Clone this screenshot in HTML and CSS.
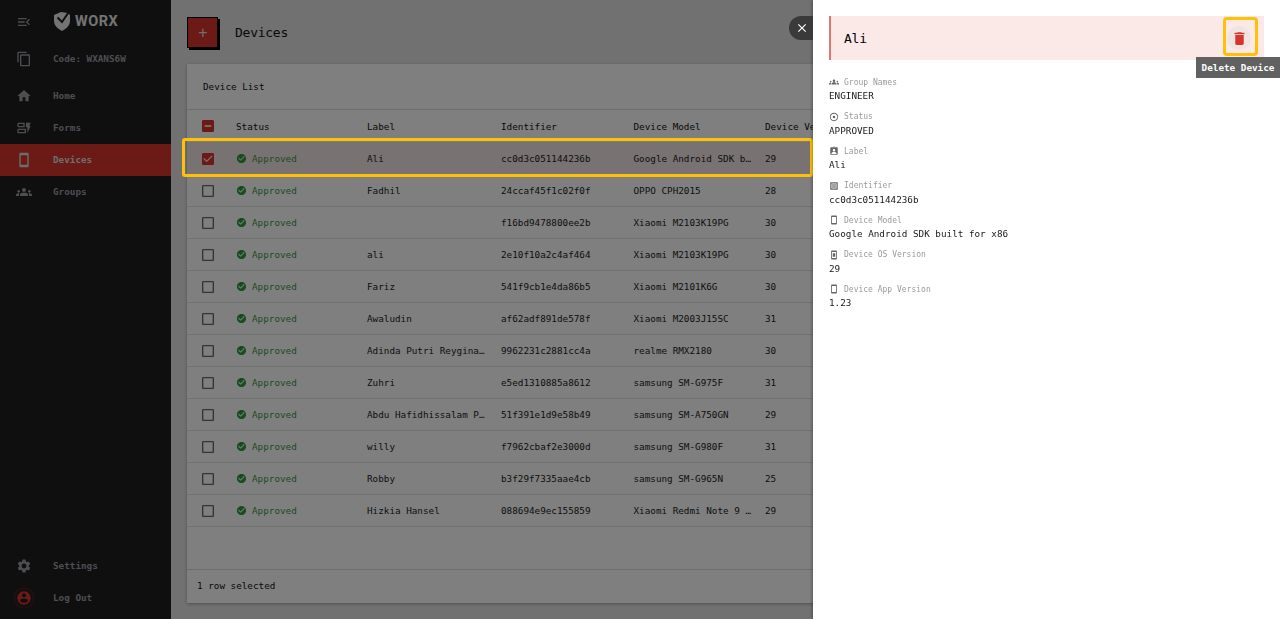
FILE: index.html
```html
<!DOCTYPE html>
<html lang="en">
<head>
<meta charset="utf-8">
<title>Devices</title>
<link rel="stylesheet" href="styles.css">
</head>
<body>
<div class="app">
  <aside class="sidebar">
    <div class="side-top">
      <div class="brand">
        <svg class="ico menu-ico" viewBox="0 0 24 24"><path d="M3 18h13v-2H3v2zm0-5h10v-2H3v2zm0-7v2h13V6H3zm18 9.59L17.42 12 21 8.41 19.59 7l-5 5 5 5L21 15.59z"/></svg>
        <svg class="logo" viewBox="0 0 18 20"><path d="M1 4 8 1l7 1 2 2v6c0 4.500-3.500 7.500-8 10-4.500-2.500-8-5.500-8-10z"/><path class="logo-cut" d="M4.500 6.500 9 11 15.500 1.500"/></svg>
        <span class="brand-name">WORX</span>
      </div>
      <div class="nav-item code"><svg class="ico" viewBox="0 0 24 24"><path d="M16 1H4c-1.100 0-2 .9-2 2v14h2V3h12V1zm3 4H8c-1.100 0-2 .9-2 2v14c0 1.100.9 2 2 2h11c1.100 0 2-.9 2-2V7c0-1.100-.9-2-2-2zm0 16H8V7h11v14z"/></svg><span>Code: WXANS6W</span></div>
      <nav class="nav">
        <div class="nav-item"><svg class="ico" viewBox="0 0 24 24"><path d="M10 20v-6h4v6h5v-8h3L12 3 2 12h3v8z"/></svg><span>Home</span></div>
        <div class="nav-item"><svg class="ico" viewBox="0 0 24 24"><path d="M13 11H4c-1.100 0-2-.9-2-2V6c0-1.100.9-2 2-2h9v7zM4 9h7V6H4v3zm11 11H4c-1.100 0-2-.9-2-2v-3c0-1.100.9-2 2-2h11v7zM4 18h9v-3H4v3zm18-9h-2l2-5h-7v7h2v9l5-11z"/></svg><span>Forms</span></div>
        <div class="nav-item active"><svg class="ico" viewBox="0 0 24 24"><path d="M17 1.010 7 1c-1.100 0-2 .9-2 2v18c0 1.100.9 2 2 2h10c1.100 0 2-.9 2-2V3c0-1.100-.9-1.990-2-1.990zM17 19H7V5h10v14z"/></svg><span>Devices</span></div>
        <div class="nav-item"><svg class="ico" viewBox="0 0 24 24"><path d="M12 12.750c1.630 0 3.070.39 4.240.9 1.080.48 1.760 1.560 1.760 2.730V18H6v-1.610c0-1.180.68-2.260 1.760-2.730 1.170-.52 2.610-.91 4.240-.91zM4 13c1.100 0 2-.9 2-2s-.9-2-2-2-2 .9-2 2 .9 2 2 2zm1.130 1.100c-.37-.06-.74-.1-1.130-.1-.99 0-1.930.21-2.780.58C.48 14.900 0 15.620 0 16.430V18h4.500v-1.610c0-.83.23-1.610.63-2.290zM20 13c1.100 0 2-.9 2-2s-.9-2-2-2-2 .9-2 2 .9 2 2 2zm4 3.430c0-.81-.48-1.530-1.220-1.850-.85-.37-1.790-.58-2.780-.58-.39 0-.76.04-1.130.1.4.68.63 1.460.63 2.290V18H24v-1.570zM12 6c1.660 0 3 1.340 3 3s-1.340 3-3 3-3-1.340-3-3 1.340-3 3-3z"/></svg><span>Groups</span></div>
      </nav>
    </div>
    <div class="side-bottom">
      <div class="nav-item"><svg class="ico" viewBox="0 0 24 24"><path d="M19.140 12.940c.04-.3.06-.61.06-.94 0-.32-.02-.64-.07-.94l2.030-1.580c.18-.14.23-.41.12-.61l-1.920-3.320c-.12-.22-.37-.29-.59-.22l-2.390.96c-.5-.38-1.030-.7-1.620-.94l-.36-2.540c-.04-.24-.24-.41-.48-.41h-3.840c-.24 0-.43.17-.47.41l-.36 2.540c-.59.24-1.130.57-1.620.94l-2.390-.96c-.22-.08-.47 0-.59.22L2.740 8.870c-.12.21-.08.47.12.61l2.030 1.580c-.05.3-.09.63-.09.94s.02.64.07.94l-2.030 1.580c-.18.14-.23.41-.12.61l1.920 3.320c.12.22.37.29.59.22l2.390-.96c.5.38 1.030.7 1.620.94l.36 2.540c.05.24.24.41.48.41h3.840c.24 0 .44-.17.47-.41l.36-2.540c.59-.24 1.130-.56 1.620-.94l2.390.96c.22.08.47 0 .59-.22l1.920-3.320c.12-.22.07-.47-.12-.61l-2.010-1.580zM12 15.600c-1.980 0-3.600-1.620-3.600-3.600s1.620-3.600 3.600-3.600 3.600 1.620 3.600 3.600-1.620 3.600-3.600 3.600z"/></svg><span>Settings</span></div>
      <div class="nav-item logout"><i class="logout-ico"><svg class="ico" viewBox="0 0 24 24"><path d="M12 2C6.480 2 2 6.480 2 12s4.480 10 10 10 10-4.480 10-10S17.520 2 12 2zm0 3c1.660 0 3 1.340 3 3s-1.340 3-3 3-3-1.340-3-3 1.340-3 3-3zm0 14.200c-2.500 0-4.710-1.280-6-3.220.03-1.990 4-3.080 6-3.080 1.990 0 5.970 1.090 6 3.080-1.290 1.940-3.500 3.220-6 3.220z"/></svg></i><span>Log Out</span></div>
    </div>
  </aside>

  <main class="main">
    <header class="page-head">
      <button class="add-btn" type="button">+</button>
      <h1 class="page-title">Devices</h1>
    </header>
    <section class="card">
      <div class="card-title">Device List</div>
      <div class="table">
        <div class="row head">
          <span class="cell-check"><svg class="box on" viewBox="0 0 24 24"><path d="M19 3H5c-1.100 0-2 .9-2 2v14c0 1.100.9 2 2 2h14c1.100 0 2-.9 2-2V5c0-1.100-.9-2-2-2zm-2 10H7v-2h10v2z"/></svg></span>
          <span class="cell">Status</span><span class="cell">Label</span><span class="cell">Identifier</span><span class="cell">Device Model</span><span class="cell">Device Version</span>
        </div>
        <div class="row selected">
          <span class="cell-check"><svg class="box on" viewBox="0 0 24 24"><path d="M19 3H5c-1.110 0-2 .9-2 2v14c0 1.100.89 2 2 2h14c1.110 0 2-.9 2-2V5c0-1.100-.89-2-2-2zm-9 14-5-5 1.410-1.410L10 14.170l7.590-7.590L19 8l-9 9z"/></svg></span>
          <span class="cell status"><svg class="ok" viewBox="0 0 24 24"><path d="M12 2C6.480 2 2 6.480 2 12s4.480 10 10 10 10-4.480 10-10S17.520 2 12 2zm-2 15-5-5 1.410-1.410L10 14.170l7.590-7.590L19 8l-9 9z"/></svg>Approved</span>
          <span class="cell">Ali</span><span class="cell">cc0d3c051144236b</span><span class="cell">Google Android SDK built for x86</span><span class="cell">29</span>
        </div>
        <div class="row"><span class="cell-check"><svg class="box" viewBox="0 0 24 24"><path d="M19 5v14H5V5h14m0-2H5c-1.100 0-2 .9-2 2v14c0 1.100.9 2 2 2h14c1.100 0 2-.9 2-2V5c0-1.100-.9-2-2-2z"/></svg></span><span class="cell status"><svg class="ok" viewBox="0 0 24 24"><path d="M12 2C6.480 2 2 6.480 2 12s4.480 10 10 10 10-4.480 10-10S17.520 2 12 2zm-2 15-5-5 1.410-1.410L10 14.170l7.590-7.590L19 8l-9 9z"/></svg>Approved</span><span class="cell">Fadhil</span><span class="cell">24ccaf45f1c02f0f</span><span class="cell">OPPO CPH2015</span><span class="cell">28</span></div>
        <div class="row"><span class="cell-check"><svg class="box" viewBox="0 0 24 24"><path d="M19 5v14H5V5h14m0-2H5c-1.100 0-2 .9-2 2v14c0 1.100.9 2 2 2h14c1.100 0 2-.9 2-2V5c0-1.100-.9-2-2-2z"/></svg></span><span class="cell status"><svg class="ok" viewBox="0 0 24 24"><path d="M12 2C6.480 2 2 6.480 2 12s4.480 10 10 10 10-4.480 10-10S17.520 2 12 2zm-2 15-5-5 1.410-1.410L10 14.170l7.590-7.590L19 8l-9 9z"/></svg>Approved</span><span class="cell"></span><span class="cell">f16bd9478800ee2b</span><span class="cell">Xiaomi M2103K19PG</span><span class="cell">30</span></div>
        <div class="row"><span class="cell-check"><svg class="box" viewBox="0 0 24 24"><path d="M19 5v14H5V5h14m0-2H5c-1.100 0-2 .9-2 2v14c0 1.100.9 2 2 2h14c1.100 0 2-.9 2-2V5c0-1.100-.9-2-2-2z"/></svg></span><span class="cell status"><svg class="ok" viewBox="0 0 24 24"><path d="M12 2C6.480 2 2 6.480 2 12s4.480 10 10 10 10-4.480 10-10S17.520 2 12 2zm-2 15-5-5 1.410-1.410L10 14.170l7.590-7.590L19 8l-9 9z"/></svg>Approved</span><span class="cell">ali</span><span class="cell">2e10f10a2c4af464</span><span class="cell">Xiaomi M2103K19PG</span><span class="cell">30</span></div>
        <div class="row"><span class="cell-check"><svg class="box" viewBox="0 0 24 24"><path d="M19 5v14H5V5h14m0-2H5c-1.100 0-2 .9-2 2v14c0 1.100.9 2 2 2h14c1.100 0 2-.9 2-2V5c0-1.100-.9-2-2-2z"/></svg></span><span class="cell status"><svg class="ok" viewBox="0 0 24 24"><path d="M12 2C6.480 2 2 6.480 2 12s4.480 10 10 10 10-4.480 10-10S17.520 2 12 2zm-2 15-5-5 1.410-1.410L10 14.170l7.590-7.590L19 8l-9 9z"/></svg>Approved</span><span class="cell">Fariz</span><span class="cell">541f9cb1e4da86b5</span><span class="cell">Xiaomi M2101K6G</span><span class="cell">30</span></div>
        <div class="row"><span class="cell-check"><svg class="box" viewBox="0 0 24 24"><path d="M19 5v14H5V5h14m0-2H5c-1.100 0-2 .9-2 2v14c0 1.100.9 2 2 2h14c1.100 0 2-.9 2-2V5c0-1.100-.9-2-2-2z"/></svg></span><span class="cell status"><svg class="ok" viewBox="0 0 24 24"><path d="M12 2C6.480 2 2 6.480 2 12s4.480 10 10 10 10-4.480 10-10S17.520 2 12 2zm-2 15-5-5 1.410-1.410L10 14.170l7.590-7.590L19 8l-9 9z"/></svg>Approved</span><span class="cell">Awaludin</span><span class="cell">af62adf891de578f</span><span class="cell">Xiaomi M2003J15SC</span><span class="cell">31</span></div>
        <div class="row"><span class="cell-check"><svg class="box" viewBox="0 0 24 24"><path d="M19 5v14H5V5h14m0-2H5c-1.100 0-2 .9-2 2v14c0 1.100.9 2 2 2h14c1.100 0 2-.9 2-2V5c0-1.100-.9-2-2-2z"/></svg></span><span class="cell status"><svg class="ok" viewBox="0 0 24 24"><path d="M12 2C6.480 2 2 6.480 2 12s4.480 10 10 10 10-4.480 10-10S17.520 2 12 2zm-2 15-5-5 1.410-1.410L10 14.170l7.590-7.590L19 8l-9 9z"/></svg>Approved</span><span class="cell">Adinda Putri Reygina Salsabila</span><span class="cell">9962231c2881cc4a</span><span class="cell">realme RMX2180</span><span class="cell">30</span></div>
        <div class="row"><span class="cell-check"><svg class="box" viewBox="0 0 24 24"><path d="M19 5v14H5V5h14m0-2H5c-1.100 0-2 .9-2 2v14c0 1.100.9 2 2 2h14c1.100 0 2-.9 2-2V5c0-1.100-.9-2-2-2z"/></svg></span><span class="cell status"><svg class="ok" viewBox="0 0 24 24"><path d="M12 2C6.480 2 2 6.480 2 12s4.480 10 10 10 10-4.480 10-10S17.520 2 12 2zm-2 15-5-5 1.410-1.410L10 14.170l7.590-7.590L19 8l-9 9z"/></svg>Approved</span><span class="cell">Zuhri</span><span class="cell">e5ed1310885a8612</span><span class="cell">samsung SM-G975F</span><span class="cell">31</span></div>
        <div class="row"><span class="cell-check"><svg class="box" viewBox="0 0 24 24"><path d="M19 5v14H5V5h14m0-2H5c-1.100 0-2 .9-2 2v14c0 1.100.9 2 2 2h14c1.100 0 2-.9 2-2V5c0-1.100-.9-2-2-2z"/></svg></span><span class="cell status"><svg class="ok" viewBox="0 0 24 24"><path d="M12 2C6.480 2 2 6.480 2 12s4.480 10 10 10 10-4.480 10-10S17.520 2 12 2zm-2 15-5-5 1.410-1.410L10 14.170l7.590-7.590L19 8l-9 9z"/></svg>Approved</span><span class="cell">Abdu Hafidhissalam Putra</span><span class="cell">51f391e1d9e58b49</span><span class="cell">samsung SM-A750GN</span><span class="cell">29</span></div>
        <div class="row"><span class="cell-check"><svg class="box" viewBox="0 0 24 24"><path d="M19 5v14H5V5h14m0-2H5c-1.100 0-2 .9-2 2v14c0 1.100.9 2 2 2h14c1.100 0 2-.9 2-2V5c0-1.100-.9-2-2-2z"/></svg></span><span class="cell status"><svg class="ok" viewBox="0 0 24 24"><path d="M12 2C6.480 2 2 6.480 2 12s4.480 10 10 10 10-4.480 10-10S17.520 2 12 2zm-2 15-5-5 1.410-1.410L10 14.170l7.590-7.590L19 8l-9 9z"/></svg>Approved</span><span class="cell">willy</span><span class="cell">f7962cbaf2e3000d</span><span class="cell">samsung SM-G980F</span><span class="cell">31</span></div>
        <div class="row"><span class="cell-check"><svg class="box" viewBox="0 0 24 24"><path d="M19 5v14H5V5h14m0-2H5c-1.100 0-2 .9-2 2v14c0 1.100.9 2 2 2h14c1.100 0 2-.9 2-2V5c0-1.100-.9-2-2-2z"/></svg></span><span class="cell status"><svg class="ok" viewBox="0 0 24 24"><path d="M12 2C6.480 2 2 6.480 2 12s4.480 10 10 10 10-4.480 10-10S17.520 2 12 2zm-2 15-5-5 1.410-1.410L10 14.170l7.590-7.590L19 8l-9 9z"/></svg>Approved</span><span class="cell">Robby</span><span class="cell">b3f29f7335aae4cb</span><span class="cell">samsung SM-G965N</span><span class="cell">25</span></div>
        <div class="row"><span class="cell-check"><svg class="box" viewBox="0 0 24 24"><path d="M19 5v14H5V5h14m0-2H5c-1.100 0-2 .9-2 2v14c0 1.100.9 2 2 2h14c1.100 0 2-.9 2-2V5c0-1.100-.9-2-2-2z"/></svg></span><span class="cell status"><svg class="ok" viewBox="0 0 24 24"><path d="M12 2C6.480 2 2 6.480 2 12s4.480 10 10 10 10-4.480 10-10S17.520 2 12 2zm-2 15-5-5 1.410-1.410L10 14.170l7.590-7.590L19 8l-9 9z"/></svg>Approved</span><span class="cell">Hizkia Hansel</span><span class="cell">088694e9ec155859</span><span class="cell">Xiaomi Redmi Note 9 Pro</span><span class="cell">29</span></div>
      </div>
      <div class="card-foot">1 row selected</div>
    </section>
  </main>
</div>

<div class="scrim"></div>
<div class="row-mark"></div>

<aside class="drawer">
  <button class="drawer-close" type="button"><svg viewBox="0 0 24 24"><path d="M19 6.410 17.590 5 12 10.590 6.410 5 5 6.410 10.590 12 5 17.590 6.410 19 12 13.410 17.590 19 19 17.590 13.410 12z"/></svg></button>
  <div class="drawer-head">
    <span class="drawer-name">Ali</span>
    <span class="del-btn"><svg viewBox="0 0 24 24"><path d="M6 19c0 1.100.9 2 2 2h8c1.100 0 2-.9 2-2V7H6v12zM19 4h-3.500l-1-1h-5l-1 1H5v2h14V4z"/></svg></span>
  </div>
  <div class="del-mark"></div>
  <div class="tooltip">Delete Device</div>
  <dl class="fields">
    <div class="field"><dt><svg viewBox="0 0 24 24"><path d="M12 12.750c1.630 0 3.070.39 4.240.9 1.080.48 1.760 1.560 1.760 2.730V18H6v-1.610c0-1.180.68-2.260 1.760-2.730 1.170-.52 2.610-.91 4.240-.91zM4 13c1.100 0 2-.9 2-2s-.9-2-2-2-2 .9-2 2 .9 2 2 2zm1.130 1.100c-.37-.06-.74-.1-1.130-.1-.99 0-1.930.21-2.780.58C.48 14.900 0 15.620 0 16.430V18h4.500v-1.610c0-.83.23-1.610.63-2.290zM20 13c1.100 0 2-.9 2-2s-.9-2-2-2-2 .9-2 2 .9 2 2 2zm4 3.430c0-.81-.48-1.530-1.220-1.850-.85-.37-1.790-.58-2.780-.58-.39 0-.76.04-1.130.1.4.68.63 1.460.63 2.290V18H24v-1.570zM12 6c1.660 0 3 1.340 3 3s-1.340 3-3 3-3-1.340-3-3 1.340-3 3-3z"/></svg>Group Names</dt><dd>ENGINEER</dd></div>
    <div class="field"><dt><svg viewBox="0 0 24 24"><path d="M12 9a3 3 0 1 0 0 6 3 3 0 0 0 0-6zm0-7C6.480 2 2 6.480 2 12s4.480 10 10 10 10-4.480 10-10S17.520 2 12 2zm0 18c-4.420 0-8-3.580-8-8s3.580-8 8-8 8 3.580 8 8-3.580 8-8 8z"/></svg>Status</dt><dd>APPROVED</dd></div>
    <div class="field"><dt><svg viewBox="0 0 24 24"><path d="M19 3h-4.180C14.400 1.840 13.300 1 12 1s-2.400.84-2.820 2H5c-1.100 0-2 .9-2 2v14c0 1.100.9 2 2 2h14c1.100 0 2-.9 2-2V5c0-1.100-.9-2-2-2zm-7 0c.55 0 1 .45 1 1s-.45 1-1 1-1-.45-1-1 .45-1 1-1zm0 4c1.660 0 3 1.340 3 3s-1.340 3-3 3-3-1.340-3-3 1.340-3 3-3zm6 12H6v-1.400c0-2 4-3.100 6-3.100s6 1.100 6 3.100V19z"/></svg>Label</dt><dd>Ali</dd></div>
    <div class="field"><dt><svg viewBox="0 0 24 24"><path fill-rule="evenodd" d="M3 3h18v18H3zM6 6v12h12V6z"/><path d="M7 7h10v10H7z" opacity=".6"/></svg>Identifier</dt><dd>cc0d3c051144236b</dd></div>
    <div class="field"><dt><svg viewBox="0 0 24 24"><path d="M17 1.010 7 1c-1.100 0-2 .9-2 2v18c0 1.100.9 2 2 2h10c1.100 0 2-.9 2-2V3c0-1.100-.9-1.990-2-1.990zM17 19H7V5h10v14z"/></svg>Device Model</dt><dd>Google Android SDK built for x86</dd></div>
    <div class="field"><dt><svg viewBox="0 0 24 24"><path fill-rule="evenodd" d="M7 1h10c1.100 0 2 .9 2 2v18c0 1.100-.9 2-2 2H7c-1.100 0-2-.9-2-2V3c0-1.100.9-2 2-2zm0 4v14h10V5zm2 3h6v8H9z"/></svg>Device OS Version</dt><dd>29</dd></div>
    <div class="field"><dt><svg viewBox="0 0 24 24"><path d="M17 1.010 7 1c-1.100 0-2 .9-2 2v18c0 1.100.9 2 2 2h10c1.100 0 2-.9 2-2V3c0-1.100-.9-1.990-2-1.990zM17 19H7V5h10v14z"/></svg>Device App Version</dt><dd>1.23</dd></div>
  </dl>
</aside>
</body>
</html>
```
FILE: styles.css
```css
* { box-sizing: border-box; }
html, body { margin: 0; height: 100%; overflow: hidden; }
body { font-family: "DejaVu Sans Mono", "Liberation Mono", monospace; font-size: 9.3px; color: #111; background: #e2e2e2; }
svg { display: block; fill: currentColor; }

.app { display: flex; height: 619px; }

.sidebar { width: 171px; flex: none; background: #1e1e1e; color: #9a9aa5; display: flex; flex-direction: column; justify-content: space-between; font-weight: 700; }
.brand { display: flex; align-items: center; height: 43px; padding: 0 0 0 16px; }
.menu-ico { margin-right: 21px; }
.ico { width: 16px; height: 16px; flex: none; }
.logo { width: 18px; height: 20px; margin-top: -2px; color: #e8e8e8; overflow: visible; }
.logo-cut { fill: none; stroke: #1e1e1e; stroke-width: 2; }
.brand-name { font-family: "Roboto", "Liberation Sans", sans-serif; font-size: 14.500px; font-weight: 700; letter-spacing: .5px; margin-left: 4px; color: #e8e8e8; }
.nav-item { display: flex; align-items: center; height: 32px; padding-left: 16px; }
.nav-item > span { margin-left: 21px; padding-bottom: 2px; }
.code { margin-bottom: 5px; }
.nav-item.active { background: #d6342c; color: #ddd; }
.side-bottom { padding-bottom: 5px; }
.logout-ico { color: #d6342c; width: 16px; height: 16px; display: block; border-radius: 50%; box-shadow: 0 0 0 3px rgba(214,52,44,.14); }

.main { flex: 1; min-width: 0; padding: 0 0 0 16px; overflow: hidden; }
.page-head { display: flex; align-items: center; height: 64px; }
.add-btn { width: 31px; height: 31px; border: 1px solid #000; background: #d6342c; color: #ddd; font-family: "Liberation Sans", sans-serif; font-size: 16px; padding: 1px 0 0 1px; box-shadow: 2px 2px 0 #000; }
.page-title { font-size: 13px; font-weight: 400; margin: 0 0 0 17px; letter-spacing: -.02em; }

.card { width: 1077px; height: 539px; background: #fff; box-shadow: 0 1px 3px rgba(0,0,0,.3); display: flex; flex-direction: column; }
.card-title { height: 46px; display: flex; align-items: center; padding-left: 16px; border-bottom: 1px solid #ddd; }
.table { flex: 1; }
.row { display: grid; grid-template-columns: 41px 131px 134px 132.500px 131.500px 507px; align-items: center; height: 32px; border-bottom: 1px solid #e4e4e4; color: #222; }
.row.head { height: 33px; color: #111; }
.row.selected { background: #f0e4e4; }
.cell-check { display: flex; justify-content: center; }
.cell { padding: 0 4px 0 8px; white-space: nowrap; overflow: hidden; text-overflow: ellipsis; min-width: 0; }
.box { width: 16px; height: 16px; color: #666; }
.box.on { color: #d6342c; }
.status { display: flex; align-items: center; gap: 5px; color: #3d9a45; }
.ok { width: 11px; height: 11px; flex: none; color: #2e9a3a; }
.card-foot { height: 34px; display: flex; align-items: center; padding: 0 0 2px 10px; border-top: 1px solid #ddd; }

.scrim { position: fixed; inset: 0; background: rgba(0,0,0,.5); }
.row-mark { position: absolute; left: 182px; top: 138px; width: 631px; height: 39px; border: 3px solid #ffc107; border-radius: 3px; }

.drawer { position: fixed; top: 0; right: 0; bottom: 0; width: 467px; background: #fff; padding: 16px 16px 0; box-shadow: -1px 0 3px rgba(0,0,0,.3); }
.drawer-close { position: absolute; left: -24px; top: 16px; width: 24px; height: 24px; border: 0; padding: 0 0 0 1px; border-radius: 12px 0 0 12px; background: #3a3a3a; color: #fff; display: flex; align-items: center; justify-content: center; }
.drawer-close svg { width: 14px; height: 14px; }
.drawer-head { height: 44px; display: flex; align-items: center; justify-content: space-between; background: #fbe9e8; border-left: 2px solid #e57373; padding: 0 13px; }
.drawer-name { font-size: 13px; letter-spacing: -.02em; color: #000; }
.del-btn { width: 24px; height: 24px; border-radius: 50%; background: #f0e4e3; color: #d6342c; display: flex; align-items: center; justify-content: center; }
.del-btn svg { width: 17px; height: 17px; }
.del-mark { position: absolute; left: 410px; top: 17px; width: 35px; height: 39px; border: 3px solid #ffc107; border-radius: 4px; }
.tooltip { position: absolute; left: 383px; top: 57px; height: 21px; width: 84px; background: #616161; color: #fff; font-size: 9.300px; font-weight: 700; display: flex; align-items: center; justify-content: center; white-space: nowrap; }

.fields { margin: 16px 0 0; }
.field { height: 34.500px; }
dt { display: flex; align-items: center; gap: 5px; height: 12px; font-size: 8px; color: #9a9a9a; }
dt svg { width: 10px; height: 10px; color: #666; flex: none; }
dd { margin: 1px 0 0; font-size: 9.300px; color: #1a1a1a; height: 14px; line-height: 14px; }
```
